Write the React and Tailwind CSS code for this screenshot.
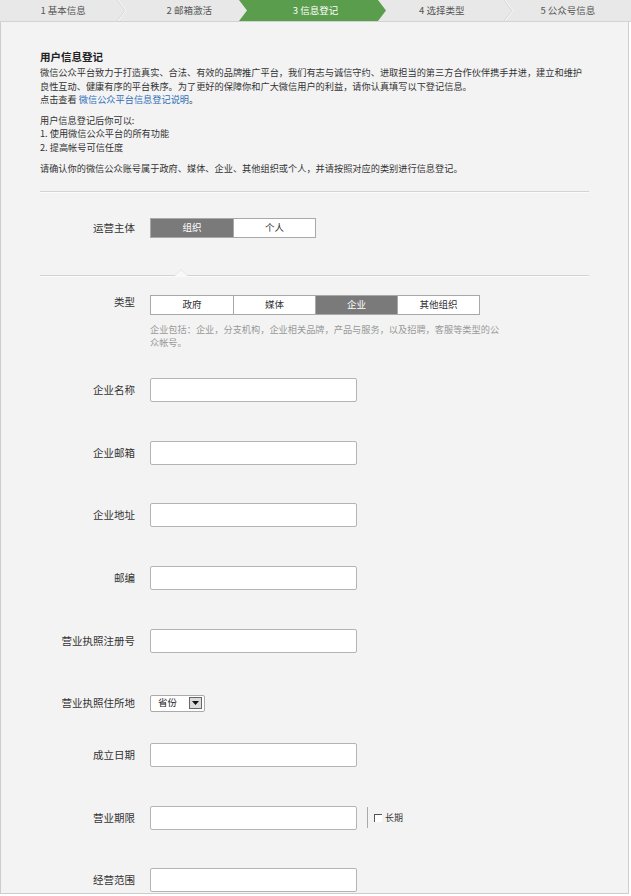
import React from "react";

const font = { fontFamily: '"Noto Sans CJK SC", "Noto Sans", sans-serif' };

const steps = ["1 基本信息", "2 邮箱激活", "3 信息登记", "4 选择类型", "5 公众号信息"];

const StepBar = () => (
  <div className="relative h-[22px] w-[631px] border-b border-[#d2d2d2] bg-[#e8e8e8]">
    <svg className="absolute left-0 top-0" width="631" height="21" viewBox="0 0 631 21">
      <polyline points="117,0 125,10.5 117,21" fill="none" stroke="#d4d4d4" strokeWidth="1" />
      <polyline points="118,0 126,10.5 118,21" fill="none" stroke="#f7f7f7" strokeWidth="1" />
      <polyline points="504,0 512,10.5 504,21" fill="none" stroke="#d4d4d4" strokeWidth="1" />
      <polyline points="505,0 513,10.5 505,21" fill="none" stroke="#f7f7f7" strokeWidth="1" />
      <polygon points="239,0 378,0 386,10.5 378,21 239,21 247,10.5" fill="#5a9e4d" />
    </svg>
    <div className="relative grid h-[21px] grid-cols-5 items-center text-center text-[9.5px] leading-[21px] text-[#555]">
      {steps.map((s, i) => (
        <span key={s} className={i === 2 ? "text-white" : ""}>
          {s}
        </span>
      ))}
    </div>
  </div>
);

const Divider = ({ notch }) => (
  <div className="relative h-[2px] border-t border-b border-t-[#d3d3d3] border-b-[#fbfbfb]">
    {notch && (
      <svg className="absolute left-[134px] top-[-7px]" width="14" height="8" viewBox="0 0 14 8">
        <polygon points="0,7.5 7,0.5 14,7.5" fill="#f8f8f8" />
        <polyline points="0,7.5 7,0.5 14,7.5" fill="none" stroke="#e6e6e6" strokeWidth="1" />
      </svg>
    )}
  </div>
);

const Segmented = ({ items, active }) => (
  <div className="flex h-[20px] w-fit border border-[#a8a8a8] bg-white">
    {items.map((item, i) => (
      <div
        key={item}
        className={`flex w-[82px] items-center justify-center text-[9.5px] ${
          i > 0 ? "border-l border-[#a8a8a8]" : ""
        } ${i === active ? "bg-[#7a7a7a] text-white" : "text-[#333]"}`}
      >
        {item}
      </div>
    ))}
  </div>
);

const Label = ({ children }) => (
  <div className="w-[110px] shrink-0 pr-[15px] text-right text-[10.5px] leading-[14px] text-[#333]">{children}</div>
);

const TextInput = () => <div className="h-[24px] w-[207px] rounded-[2px] border border-[#b4b4b4] bg-white" />;

const rows = [
  { label: "企业名称", mt: "mt-[29px]" },
  { label: "企业邮箱", mt: "mt-[39px]" },
  { label: "企业地址", mt: "mt-[38px]" },
  { label: "邮编", mt: "mt-[39px]" },
  { label: "营业执照注册号", mt: "mt-[39px]" },
];

export default function App() {
  return (
    <div className="h-[896px] w-[631px] overflow-hidden bg-white" style={font}>
      <StepBar />
      <div className="h-[872px] w-[629px] overflow-hidden border-x border-b border-[#cdcdcd] bg-[#f3f3f3] px-[39px] pt-[28px] text-[#333]">
        <h2 className="text-[10.5px] font-bold leading-[14px] text-[#222]">用户信息登记</h2>
        <div className="mt-[2px] whitespace-nowrap text-[9.2px] leading-[13.5px]">
          <p>微信公众平台致力于打造真实、合法、有效的品牌推广平台，我们有志与诚信守约、进取担当的第三方合作伙伴携手并进，建立和维护</p>
          <p>良性互动、健康有序的平台秩序。为了更好的保障你和广大微信用户的利益，请你认真填写以下登记信息。</p>
          <p>
            点击查看 <a className="text-[#2f6fb8]">微信公众平台信息登记说明</a>。
          </p>
          <p className="mt-[7px]">用户信息登记后你可以:</p>
          <p>1. 使用微信公众平台的所有功能</p>
          <p>2. 提高帐号可信任度</p>
          <p className="mt-[8px]">请确认你的微信公众账号属于政府、媒体、企业、其他组织或个人，并请按照对应的类别进行信息登记。</p>
        </div>

        <div className="mt-[15px]">
          <Divider />
        </div>

        <div className="mt-[25px] flex items-center">
          <Label>运营主体</Label>
          <Segmented items={["组织", "个人"]} active={0} />
        </div>

        <div className="mt-[37px]">
          <Divider notch />
        </div>

        <div className="mt-[18px] flex items-start">
          <Label>类型</Label>
          <div>
            <Segmented items={["政府", "媒体", "企业", "其他组织"]} active={2} />
            <p className="mt-[8px] whitespace-nowrap text-[9.2px] leading-[13px] text-[#999]">
              企业包括：企业，分支机构，企业相关品牌，产品与服务，以及招聘，客服等类型的公
              <br />
              众帐号。
            </p>
          </div>
        </div>

        {rows.map((r) => (
          <div key={r.label} className={`${r.mt} flex items-center`}>
            <Label>{r.label}</Label>
            <TextInput />
          </div>
        ))}

        <div className="mt-[42px] flex items-center">
          <Label>营业执照住所地</Label>
          <div className="flex h-[17px] w-[55px] items-center justify-between rounded-[2px] border border-[#aaa] bg-white pl-[7px] pr-[2px]">
            <span className="text-[9.5px] leading-none text-[#222]">省份</span>
            <div className="flex h-[12px] w-[13px] items-center justify-center border border-[#666] bg-[#dcdcdc]">
              <svg width="7" height="4" viewBox="0 0 7 4">
                <polygon points="0,0 7,0 3.5,4" fill="#111" />
              </svg>
            </div>
          </div>
        </div>

        <div className="mt-[31px] flex items-center">
          <Label>成立日期</Label>
          <TextInput />
        </div>

        <div className="mt-[39px] flex items-center">
          <Label>营业期限</Label>
          <TextInput />
          <div className="ml-[10px] h-[21px] w-px bg-[#aaa]" />
          <div className="ml-[6px] h-[8px] w-[8px] border-l border-t border-[#555] bg-white" />
          <span className="ml-[3px] text-[9px] text-[#333]">长期</span>
        </div>

        <div className="mt-[38px] flex items-center">
          <Label>经营范围</Label>
          <TextInput />
        </div>
      </div>
    </div>
  );
}
